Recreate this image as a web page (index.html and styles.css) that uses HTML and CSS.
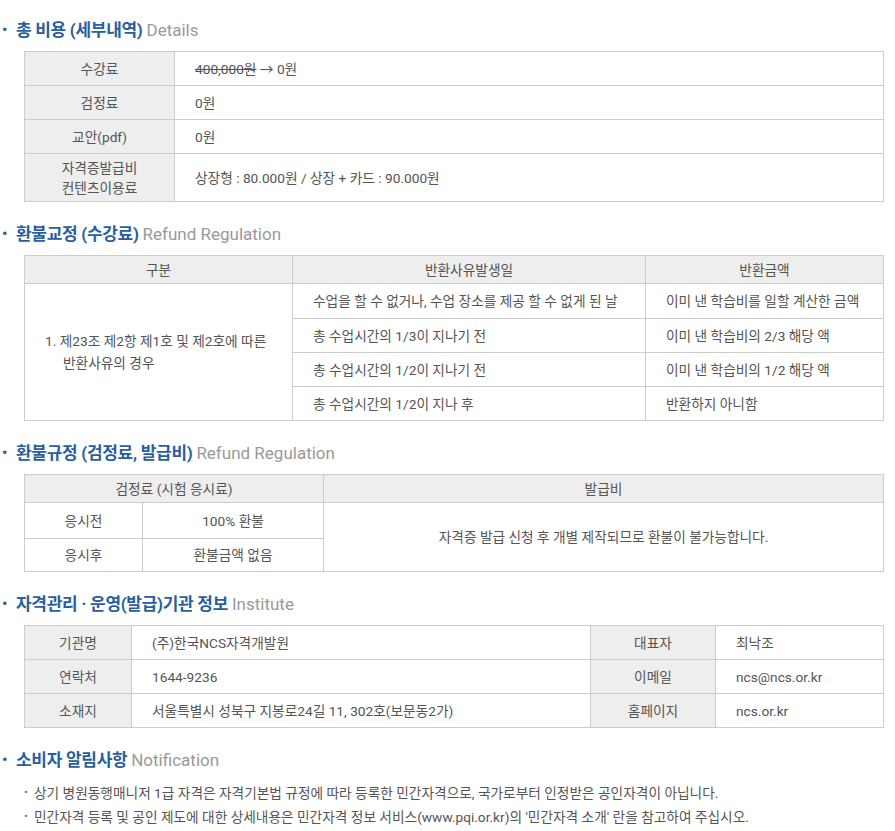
FILE: index.html
```html
<!DOCTYPE html>
<html lang="ko">
<head>
<meta charset="utf-8">
<title>총 비용</title>
<link rel="stylesheet" href="styles.css">
</head>
<body>
<div class="page">
  <h3 class="sec-title first"><span class="dot">•</span>총 비용 (세부내역) <span class="en">Details</span></h3>
  <table class="tbl t1">
    <colgroup><col class="c1-1"><col></colgroup>
    <tr><th>수강료</th><td class="left"><del>400,000원</del> → 0원</td></tr>
    <tr><th>검정료</th><td class="left">0원</td></tr>
    <tr><th>교안(pdf)</th><td class="left">0원</td></tr>
    <tr class="two"><th>자격증발급비<br>컨텐츠이용료</th><td class="left">상장형 : 80.000원 / 상장 + 카드 : 90.000원</td></tr>
  </table>

  <h3 class="sec-title"><span class="dot">•</span>환불교정 (수강료) <span class="en">Refund Regulation</span></h3>
  <table class="tbl t2">
    <colgroup><col class="c2-1"><col class="c2-2"><col></colgroup>
    <tr class="head"><th>구분</th><th>반환사유발생일</th><th>반환금액</th></tr>
    <tr class="firstrow">
      <td rowspan="4" class="reason"><p>1. 제23조 제2항 제1호 및 제2호에 따른 반환사유의 경우</p></td>
      <td class="left">수업을 할 수 없거나, 수업 장소를 제공 할 수 없게 된 날</td>
      <td class="left">이미 낸 학습비를 일할 계산한 금액</td>
    </tr>
    <tr><td class="left">총 수업시간의 1/3이 지나기 전</td><td class="left">이미 낸 학습비의 2/3 해당 액</td></tr>
    <tr><td class="left">총 수업시간의 1/2이 지나기 전</td><td class="left">이미 낸 학습비의 1/2 해당 액</td></tr>
    <tr><td class="left">총 수업시간의 1/2이 지나 후</td><td class="left">반환하지 아니함</td></tr>
  </table>

  <h3 class="sec-title"><span class="dot">•</span>환불규정 (검정료, 발급비) <span class="en">Refund Regulation</span></h3>
  <table class="tbl t3">
    <colgroup><col class="c3-1"><col class="c3-2"><col></colgroup>
    <tr class="head"><th colspan="2">검정료 (시험 응시료)</th><th>발급비</th></tr>
    <tr class="r1"><td>응시전</td><td>100% 환불</td><td rowspan="2">자격증 발급 신청 후 개별 제작되므로 환불이 불가능합니다.</td></tr>
    <tr class="r2"><td>응시후</td><td>환불금액 없음</td></tr>
  </table>

  <h3 class="sec-title"><span class="dot">•</span>자격관리 · 운영(발급)기관 정보 <span class="en">Institute</span></h3>
  <table class="tbl t4">
    <colgroup><col class="c4-1"><col class="c4-2"><col class="c4-3"><col></colgroup>
    <tr><th>기관명</th><td class="left">(주)한국NCS자격개발원</td><th>대표자</th><td class="left">최낙조</td></tr>
    <tr><th>연락처</th><td class="left">1644-9236</td><th>이메일</th><td class="left">ncs@ncs.or.kr</td></tr>
    <tr><th>소재지</th><td class="left">서울특별시 성북구 지봉로24길 11, 302호(보문동2가)</td><th>홈페이지</th><td class="left">ncs.or.kr</td></tr>
  </table>

  <h3 class="sec-title"><span class="dot">•</span>소비자 알림사항 <span class="en">Notification</span></h3>
  <ul class="notes">
    <li>상기 병원동행매니저 1급 자격은 자격기본법 규정에 따라 등록한 민간자격으로, 국가로부터 인정받은 공인자격이 아닙니다.</li>
    <li>민간자격 등록 및 공인 제도에 대한 상세내용은 민간자격 정보 서비스(www.pqi.or.kr)의 '민간자격 소개' 란을 참고하여 주십시오.</li>
  </ul>
</div>
</body>
</html>
```

FILE: styles.css
```css
html, body {
  margin: 0;
  padding: 0;
  background: #fff;
}
body {
  font-family: "Roboto", "Noto Sans CJK KR", sans-serif;
  font-size: 13.7px;
  color: #555;
  word-break: keep-all;
}
.page {
  padding: 19px 0 0 0;
}
.sec-title {
  margin: 21px 0 10px 0;
  padding-left: 2px;
  height: 22px;
  line-height: 22px;
  font-size: 17px;
  font-weight: 700;
  color: #2a5f9e;
  letter-spacing: -0.3px;
}
.sec-title.first {
  margin-top: 0;
}
.sec-title .dot {
  display: inline-block;
  width: 14px;
  font-size: 15px;
  vertical-align: top;
}
.sec-title .en {
  font-weight: 400;
  color: #999;
  letter-spacing: 0;
}
.tbl {
  margin-left: 24px;
  width: 860px;
  border-collapse: collapse;
  table-layout: fixed;
  border: 1px solid #ccc;
}
.tbl th, .tbl td {
  border: 1px solid #ccc;
  font-weight: 400;
  text-align: center;
  vertical-align: middle;
  padding: 0 20px;
  line-height: 20px;
  color: #555;
}
.tbl th {
  background: #eee;
}
.tbl td.left {
  text-align: left;
}
.t1 .c1-1 { width: 150px; }
.t1 tr { height: 34px; }
.t1 tr.two { height: 48px; }
.t1 td.left { padding-left: 20px; }
.t1 del { text-decoration: line-through; }

.t2 .c2-1 { width: 268px; }
.t2 .c2-2 { width: 353px; }
.t2 tr { height: 34px; }
.t2 tr.firstrow { height: 35px; }
.t2 tr.head { height: 28px; }
.t2 td.reason {
  text-align: left;
  padding: 0 10px 0 20px;
}
.t2 td.reason p {
  margin: 0 0 0 18px;
  text-indent: -18px;
  line-height: 22px;
}
.t3 .c3-1 { width: 118px; }
.t3 .c3-2 { width: 181px; }
.t3 tr.head { height: 28px; }
.t3 tr.r1 { height: 36px; }
.t3 tr.r2 { height: 33px; }

.t4 .c4-1 { width: 107px; }
.t4 .c4-2 { width: 459px; }
.t4 .c4-3 { width: 125px; }
.t4 tr { height: 34px; }

.notes {
  list-style: none;
  margin: 8px 0 0 0;
  padding: 0 0 2px 24px;
  border-bottom: 1px solid #ccc;
}
.notes li {
  line-height: 24px;
  position: relative;
  padding-left: 10px;
}
.notes li::before {
  content: "•";
  position: absolute;
  left: 0;
  top: 0;
  font-size: 11px;
  color: #777;
}
```
